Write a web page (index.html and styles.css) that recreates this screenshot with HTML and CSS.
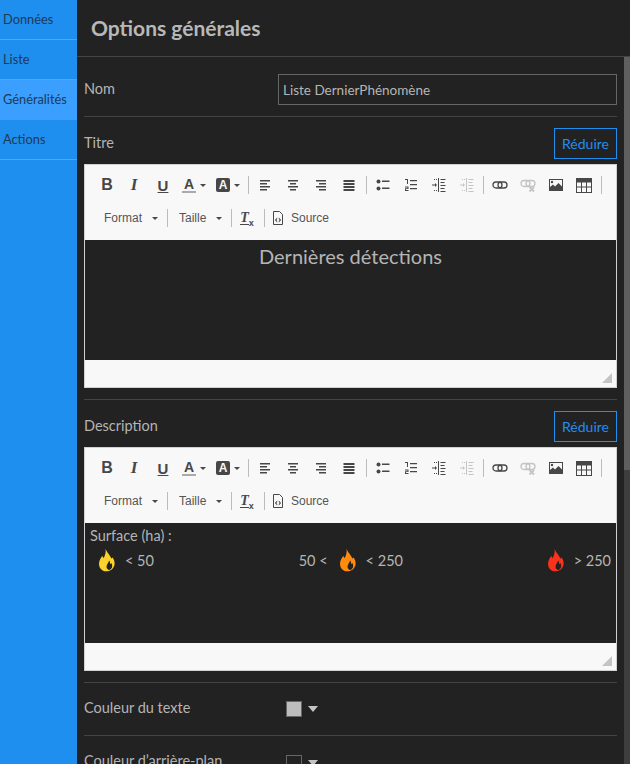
FILE: index.html
```html
<!DOCTYPE html>
<html lang="fr">
  <head>
    <meta charset="UTF-8" />
    <title>Options générales</title>
    <link rel="stylesheet" href="styles.css">
  </head>
  <body>
    <!-- icones de la barre d'outils -->
    <svg class="defs" width="0" height="0">
      <symbol id="i-left" viewBox="0 0 16 16"><path d="M3 3h10v1.500H3zM3 6h7v1.500H3zM3 9h10v1.500H3zM3 12h7v1.500H3z"/></symbol>
      <symbol id="i-center" viewBox="0 0 16 16"><path d="M3 3h10v1.500H3zM5 6h6v1.500H5zM3 9h10v1.500H3zM5 12h6v1.500H5z"/></symbol>
      <symbol id="i-right" viewBox="0 0 16 16"><path d="M3 3h10v1.500H3zM6 6h7v1.500H6zM3 9h10v1.500H3zM6 12h7v1.500H6z"/></symbol>
      <symbol id="i-justify" viewBox="0 0 16 16"><path d="M2.500 3h11v2h-11zM2.500 6h11v2h-11zM2.500 9h11v2h-11zM2.500 12h11v2h-11z"/></symbol>
      <symbol id="i-bullets" viewBox="0 0 16 16"><circle cx="3.500" cy="4.500" r="2"/><circle cx="3.500" cy="11.500" r="2"/><path d="M7 3.500h7.500V5H7zM7 10.500h7.500V12H7z"/></symbol>
      <symbol id="i-numbers" viewBox="0 0 16 16"><path d="M2 2h3v5H4V3H2zM2 9.500h3.500V12H3v1h2.500v1H2v-2.700h2.500v-.8H2zM7 3h7v1.300H7zM7 7h7v1.300H7zM7 11h7v1.300H7z"/></symbol>
      <symbol id="i-indent" viewBox="0 0 16 16"><path d="M7 1h1v14H7zM9.500 2h5v1h-5zM9.500 5h4v1h-4zM9.500 8h5v1h-5zM9.500 11h4v1h-4zM9.500 14h5v1h-5zM1 7.500h3V6l2 2-2 2V8.500H1zM3 2h1v1H3zM5 2h1v1H5zM3 13h1v1H3zM5 13h1v1H5z"/></symbol>
      <symbol id="i-link" viewBox="0 0 16 16"><g fill="none" stroke="currentColor" stroke-width="1.300"><rect x="1" y="5" width="9" height="6" rx="3"/><rect x="6" y="5" width="9" height="6" rx="3"/></g></symbol>
      <symbol id="i-unlink" viewBox="0 0 16 16"><g fill="none" stroke="currentColor"><rect x="1" y="3.500" width="9" height="6" rx="3" stroke-width="1.300"/><rect x="6" y="3.500" width="9" height="6" rx="3" stroke-width="1.300"/><path stroke-width="1.800" d="M9.500 10l4.500 4.500M14 10l-4.500 4.500"/></g></symbol>
      <symbol id="i-image" viewBox="0 0 16 16"><path fill-rule="evenodd" d="M1 2h14v12H1zM2 3v7l3-2.500 2 2 3.500-3.500 3.500 3.500V3z"/><circle cx="4" cy="5" r="1.200"/></symbol>
      <symbol id="i-table" viewBox="0 0 16 16"><path fill-rule="evenodd" d="M0 1h16v15H0zM1 5.500v4h4v-4zM6 5.500v4h4v-4zM11 5.500v4h4v-4zM1 10.500v4.500h4v-4.500zM6 10.500v4.500h4v-4.500zM11 10.500v4.500h4v-4.500z"/></symbol>
      <symbol id="i-source" viewBox="0 0 16 16"><path fill="none" stroke="currentColor" d="M3.500 1.500h6l3 3v10h-9z"/><path d="M7.200 7.500L4.900 10l2.300 2.500v-1.500L6.300 10l.9-1zM8.800 7.500l2.300 2.500-2.300 2.500v-1.500l.9-1-.9-1z"/></symbol>
      <symbol id="i-flame" viewBox="0 0 17 24"><path fill-rule="evenodd" d="M7 0C8 3 10 5 11.500 7.500 12.500 9 13 10 13.200 10.500 13.800 10 14 9.500 14 9 16 11 17 14 16.500 17 15.500 21.500 12 24 7.500 24 3 24 0 20.500 0 16 0 12 2.500 9.500 3.500 7.500 4 9 4.500 9.500 5 10 6.500 7 7.500 4 7 0ZM10.800 12.500C10 15 7.800 17 8 19.500 8.200 21.500 9.500 22.500 10.800 22.500 12.800 22.500 14 20.500 14 18.500 14 17 13.500 16 12.900 15.200 12.600 15.800 12.200 16.200 11.700 16.200 11.900 15 11.700 13.500 10.800 12.500Z"/></symbol>
    </svg>

    <div id="wrapper">
      <div class="side">
        <div class="side-item">Données</div>
        <div class="side-item">Liste</div>
        <div class="side-item active">Généralités</div>
        <div class="side-item">Actions</div>
      </div>

      <div class="main">
        <div class="head"><h1>Options générales</h1></div>
        <div class="scroll">
          <div class="content">
            <div class="row row-nom">
              <span class="label">Nom</span>
              <input class="field" type="text" value="Liste DernierPhénomène" />
            </div>

            <div class="block">
              <div class="block-head">
                <span class="label">Titre</span>
                <button class="reduce">Réduire</button>
              </div>
              <div class="editor">
                <div class="toolbar">
                  <div class="tools">
                    <span class="btn bold">B</span>
                    <span class="btn ital">I</span>
                    <span class="btn under">U</span>
                    <span class="btn drop"><span class="a-text">A</span><i class="caret"></i></span>
                    <span class="btn drop"><span class="a-back">A</span><i class="caret"></i></span>
                    <i class="sep"></i>
                    <span class="btn"><svg><use href="#i-left"/></svg></span>
                    <span class="btn"><svg><use href="#i-center"/></svg></span>
                    <span class="btn"><svg><use href="#i-right"/></svg></span>
                    <span class="btn"><svg><use href="#i-justify"/></svg></span>
                    <i class="sep"></i>
                    <span class="btn"><svg><use href="#i-bullets"/></svg></span>
                    <span class="btn"><svg><use href="#i-numbers"/></svg></span>
                    <span class="btn"><svg><use href="#i-indent"/></svg></span>
                    <span class="btn off"><svg><use href="#i-indent"/></svg></span>
                    <i class="sep sep-tight"></i>
                    <span class="btn"><svg><use href="#i-link"/></svg></span>
                    <span class="btn off"><svg><use href="#i-unlink"/></svg></span>
                    <span class="btn"><svg><use href="#i-image"/></svg></span>
                    <span class="btn"><svg><use href="#i-table"/></svg></span>
                    <i class="sep"></i>
                  </div>
                  <div class="tools">
                    <span class="combo combo-format">Format<i class="caret"></i></span>
                    <i class="sep"></i>
                    <span class="combo combo-size">Taille<i class="caret"></i></span>
                    <i class="sep"></i>
                    <span class="btn clear"><span class="t-x">T</span><span class="x-x">x</span></span>
                    <i class="sep"></i>
                    <span class="source"><svg><use href="#i-source"/></svg>Source</span>
                  </div>
                </div>
                <div class="text title-text">Dernières détections</div>
                <div class="status"><i class="grip"></i></div>
              </div>
            </div>

            <div class="block">
              <div class="block-head">
                <span class="label">Description</span>
                <button class="reduce">Réduire</button>
              </div>
              <div class="editor">
                <div class="toolbar">
                  <div class="tools">
                    <span class="btn bold">B</span>
                    <span class="btn ital">I</span>
                    <span class="btn under">U</span>
                    <span class="btn drop"><span class="a-text">A</span><i class="caret"></i></span>
                    <span class="btn drop"><span class="a-back">A</span><i class="caret"></i></span>
                    <i class="sep"></i>
                    <span class="btn"><svg><use href="#i-left"/></svg></span>
                    <span class="btn"><svg><use href="#i-center"/></svg></span>
                    <span class="btn"><svg><use href="#i-right"/></svg></span>
                    <span class="btn"><svg><use href="#i-justify"/></svg></span>
                    <i class="sep"></i>
                    <span class="btn"><svg><use href="#i-bullets"/></svg></span>
                    <span class="btn"><svg><use href="#i-numbers"/></svg></span>
                    <span class="btn"><svg><use href="#i-indent"/></svg></span>
                    <span class="btn off"><svg><use href="#i-indent"/></svg></span>
                    <i class="sep sep-tight"></i>
                    <span class="btn"><svg><use href="#i-link"/></svg></span>
                    <span class="btn off"><svg><use href="#i-unlink"/></svg></span>
                    <span class="btn"><svg><use href="#i-image"/></svg></span>
                    <span class="btn"><svg><use href="#i-table"/></svg></span>
                    <i class="sep"></i>
                  </div>
                  <div class="tools">
                    <span class="combo combo-format">Format<i class="caret"></i></span>
                    <i class="sep"></i>
                    <span class="combo combo-size">Taille<i class="caret"></i></span>
                    <i class="sep"></i>
                    <span class="btn clear"><span class="t-x">T</span><span class="x-x">x</span></span>
                    <i class="sep"></i>
                    <span class="source"><svg><use href="#i-source"/></svg>Source</span>
                  </div>
                </div>
                <div class="text desc-text">
                  <div>Surface (ha) :</div>
                  <div class="legend">
                    <span class="legend-item first"><svg class="flame yellow"><use href="#i-flame"/></svg>&lt; 50</span>
                    <span class="legend-item">50 &lt;<svg class="flame orange"><use href="#i-flame"/></svg>&lt; 250</span>
                    <span class="legend-item"><svg class="flame red"><use href="#i-flame"/></svg>&gt; 250</span>
                  </div>
                </div>
                <div class="status"><i class="grip"></i></div>
              </div>
            </div>

            <div class="row row-color">
              <span class="color-label">Couleur du texte</span>
              <i class="swatch grey"></i><i class="arrow"></i>
            </div>
            <div class="row row-color last">
              <span class="color-label">Couleur d’arrière-plan</span>
              <i class="swatch"></i><i class="arrow"></i>
            </div>
          </div>
          <div class="scrollbar"><div class="thumb"></div></div>
        </div>
      </div>
    </div>
  </body>
</html>
```

FILE: styles.css
```css
* {
  box-sizing: border-box;
}

html,
body {
  margin: 0;
  height: 100%;
  overflow: hidden;
}

body {
  background-color: #222;
  color: #b5b5b5;
  font-family: "Lato", "Liberation Sans", sans-serif;
  font-size: 14.5px;
}

.defs {
  position: absolute;
}

#wrapper {
  display: flex;
  height: 764px;
}

/* menu de gauche */
.side {
  width: 77px;
  flex: none;
  background-color: #1f8fef;
  color: #1d3a55;
  font-size: 12.8px;
}

.side-item {
  height: 40px;
  padding-left: 3px;
  line-height: 39px;
  border-bottom: 1px solid #4aa8f5;
}

.side-item.active {
  background-color: #3a9fff;
  border-bottom-color: #3a9fff;
}

.main {
  display: flex;
  flex-direction: column;
  flex: 1;
  min-width: 0;
}

.head {
  height: 57px;
  flex: none;
  padding-left: 14px;
  border-bottom: 1px solid #444;
}

.head h1 {
  margin: 0;
  font-size: 21px;
  line-height: 55px;
  color: #b8b8b8;
}

.scroll {
  display: flex;
  flex: 1;
  min-height: 0;
}

.content {
  flex: 1;
  min-width: 0;
  padding: 0 7px;
}

.scrollbar {
  width: 6px;
  flex: none;
  background-color: #3e3e3e;
}

.thumb {
  height: 413px;
  background-color: #5f5f5f;
}

.label {
  padding-bottom: 2px;
}

.row {
  display: flex;
  align-items: center;
  border-bottom: 1px solid #444;
}

.row-nom {
  height: 60px;
  padding-top: 6px;
  justify-content: space-between;
}

.field {
  width: 339px;
  height: 31px;
  padding: 0 4px;
  border: 1px solid #666;
  background: transparent;
  color: #b5b5b5;
  font-family: "Lato", "Liberation Sans", sans-serif;
  font-size: 13.5px;
}

.block {
  height: 283px;
  padding-top: 11px;
  border-bottom: 1px solid #444;
}

.block-head {
  display: flex;
  justify-content: space-between;
  align-items: center;
  height: 31px;
  margin-bottom: 5px;
}

.reduce {
  width: 63px;
  height: 31px;
  padding: 0;
  border: 1px solid #1f8fef;
  background: transparent;
  color: #1f8fef;
  font-family: "Lato", "Liberation Sans", sans-serif;
  font-size: 14px;
}

/* editeur */
.editor {
  border: 1px solid #d1d1d1;
  background-color: #f8f8f8;
}

.toolbar {
  height: 75px;
  padding: 6px 0 0 8px;
  color: #474747;
  font-family: "Liberation Sans", sans-serif;
}

.tools {
  display: flex;
  align-items: center;
  height: 28px;
  margin-bottom: 5px;
}

.btn {
  display: flex;
  align-items: center;
  justify-content: center;
  width: 28px;
  height: 28px;
  flex: none;
}

.btn svg {
  width: 16px;
  height: 16px;
  fill: currentColor;
}

.btn.off {
  color: #c4c4c4;
}

.btn.drop {
  width: 34px;
}

.bold {
  font-size: 16px;
  font-weight: bold;
}

.ital {
  font-family: "Liberation Serif", serif;
  font-size: 17px;
  font-weight: bold;
  font-style: italic;
  margin-left: -1px;
  margin-right: 1px;
}

.under {
  font-size: 15px;
  font-weight: bold;
  text-decoration: underline;
}

.a-text {
  font-size: 14px;
  font-weight: bold;
  line-height: 14px;
  padding: 0 2px;
  border-bottom: 2px solid #aaa;
}

.a-back {
  width: 14px;
  height: 14px;
  border-radius: 2px;
  background-color: #474747;
  color: #f8f8f8;
  font-size: 12px;
  font-weight: bold;
  line-height: 14px;
  text-align: center;
}

.caret {
  width: 0;
  height: 0;
  margin-left: 4px;
  border-top: 3px solid #474747;
  border-left: 3px solid transparent;
  border-right: 3px solid transparent;
}

.sep {
  width: 1px;
  height: 18px;
  flex: none;
  margin: 0 2px 0 3px;
  background-color: #bcbcbc;
}

.sep-tight {
  margin: 0 2px 0 2px;
}

.combo {
  display: flex;
  align-items: center;
  justify-content: space-between;
  height: 28px;
  padding-right: 6px;
  color: #555;
  font-size: 12px;
  flex: none;
}

.combo-format {
  width: 60px;
  margin-left: 11px;
}

.combo-size {
  width: 49px;
  margin-left: 9px;
}

.clear {
  margin-left: -1px;
  font-family: "Liberation Serif", serif;
  font-style: italic;
  font-weight: bold;
}

.t-x {
  font-size: 14px;
  border-bottom: 1px solid #474747;
  line-height: 13px;
}

.x-x {
  font-family: "Liberation Sans", sans-serif;
  font-style: normal;
  font-size: 9px;
  line-height: 9px;
  margin-top: 10px;
}

.source {
  display: flex;
  align-items: center;
  gap: 5px;
  margin-left: 3px;
  color: #555;
  font-size: 12px;
}

.source svg {
  width: 16px;
  height: 16px;
  fill: #474747;
  color: #474747;
}

.text {
  height: 120px;
  background-color: #222;
  color: #b5b5b5;
}

.title-text {
  padding-top: 4px;
  font-size: 20px;
  text-align: center;
}

.desc-text {
  padding: 4px 5px 0;
}

.legend {
  display: flex;
  justify-content: space-between;
  margin-top: 4px;
}

.legend-item {
  display: flex;
  align-items: center;
  gap: 10px;
}

.legend-item.first {
  padding-left: 9px;
}

.flame {
  width: 16px;
  height: 24px;
}

.yellow {
  fill: #fbd12c;
}

.orange {
  fill: #ff8a0c;
  margin-left: 2px;
}

.red {
  fill: #f9321b;
}

.status {
  display: flex;
  justify-content: flex-end;
  align-items: flex-end;
  height: 27px;
  padding: 0 4px 4px 0;
}

.grip {
  width: 0;
  height: 0;
  border-bottom: 10px solid #c4c4c4;
  border-left: 10px solid transparent;
}

.row-color {
  height: 53px;
}

.row-color.last {
  border-bottom: 0;
}

.color-label {
  width: 202px;
  padding-bottom: 4px;
}

.swatch {
  width: 16px;
  height: 16px;
  border: 1px solid #666;
}

.swatch.grey {
  background-color: #bdbdbd;
}

.arrow {
  width: 0;
  height: 0;
  margin-left: 6px;
  border-top: 6px solid #c4c4c4;
  border-left: 5px solid transparent;
  border-right: 5px solid transparent;
}
```
